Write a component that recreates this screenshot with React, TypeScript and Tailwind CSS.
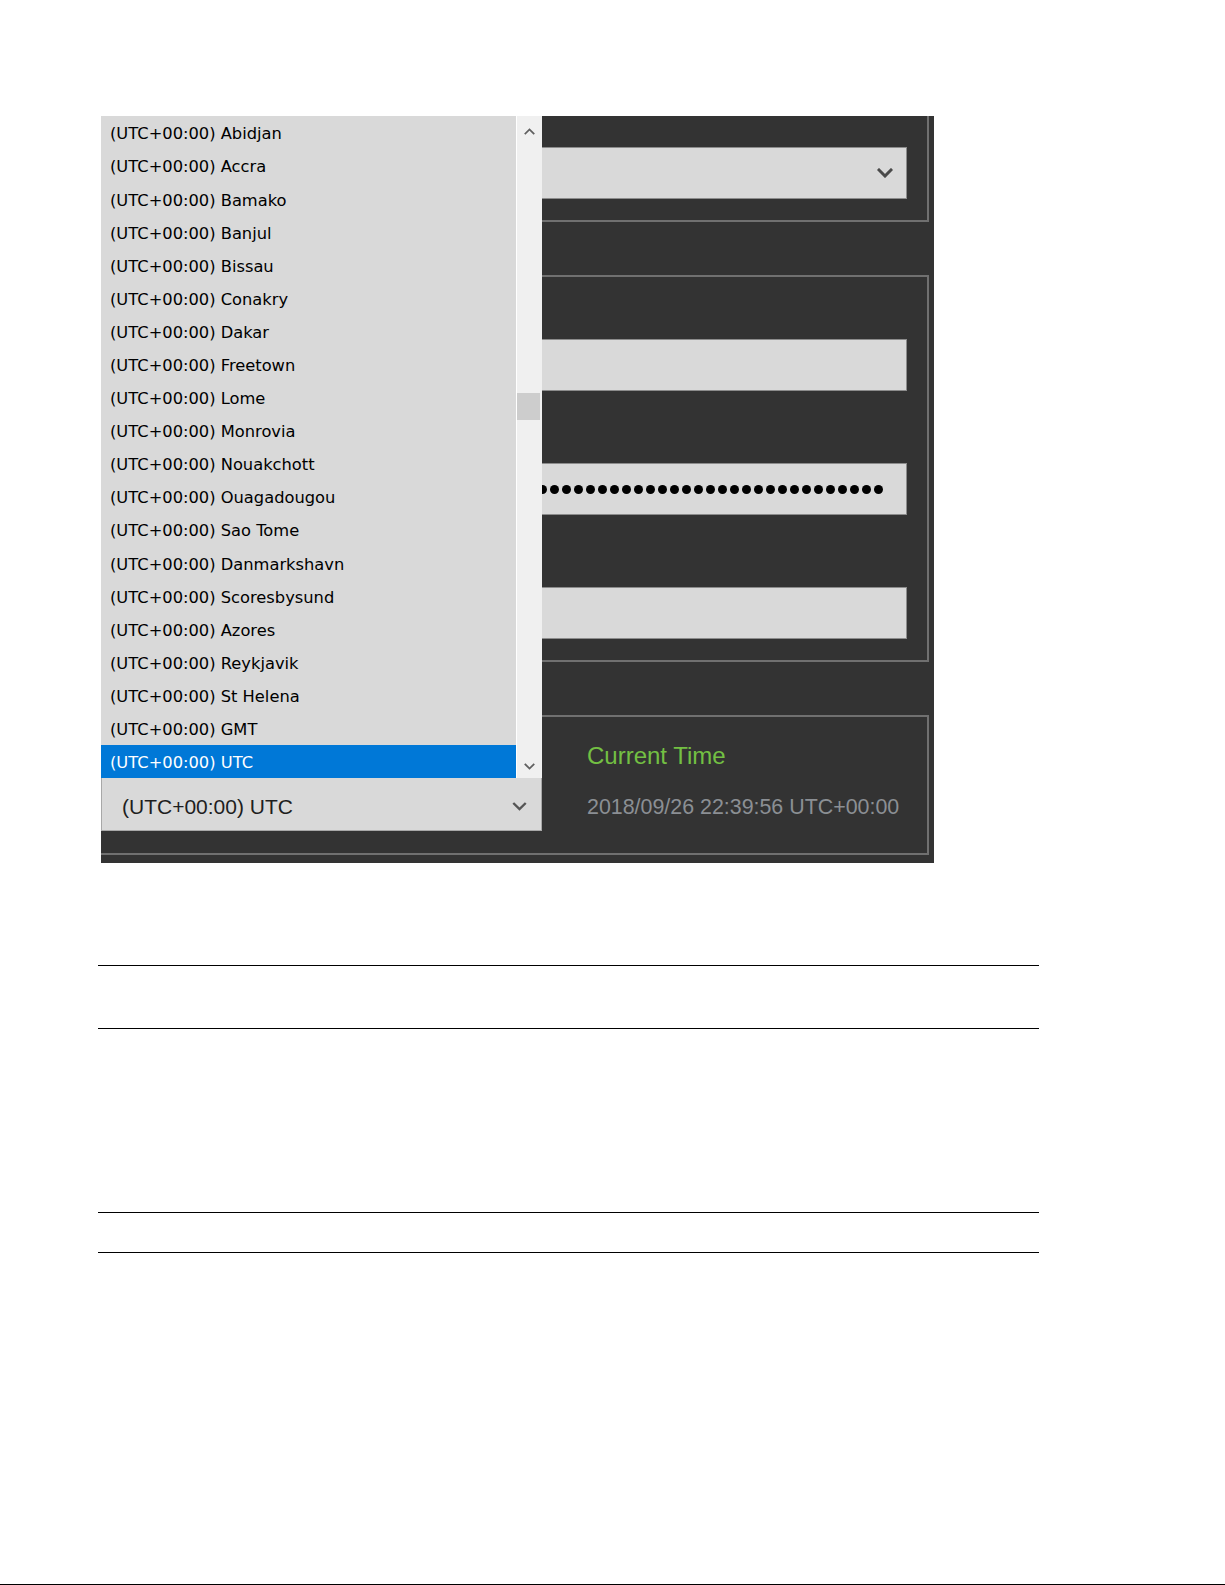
import React from 'react';

const zones = [
  'Abidjan', 'Accra', 'Bamako', 'Banjul', 'Bissau', 'Conakry', 'Dakar', 'Freetown', 'Lome', 'Monrovia',
  'Nouakchott', 'Ouagadougou', 'Sao Tome', 'Danmarkshavn', 'Scoresbysund', 'Azores', 'Reykjavik', 'St Helena', 'GMT', 'UTC',
];

function Chevron({ up = false, className = '', strokeWidth = 3 }: { up?: boolean; className?: string; strokeWidth?: number }) {
  return (
    <svg viewBox="0 0 16 10" className={className} fill="none" stroke="currentColor" strokeWidth={strokeWidth} strokeLinecap="square">
      <polyline points={up ? '2,8 8,2 14,8' : '2,2 8,8 14,2'} />
    </svg>
  );
}

function DropList() {
  return (
    <div className="absolute top-0 left-0 w-[441px] h-[662px] bg-[#d9d9d9] flex z-10">
      <div className="flex-1 flex flex-col">
        {zones.map((z, i) => {
          const active = i === zones.length - 1;
          return (
            <div
              key={z}
              className={`h-[33.1px] flex items-center pl-[9px] pt-[4px] text-[16.3px] font-['DejaVu_Sans',sans-serif] whitespace-nowrap ${
                active ? 'bg-[#0078d7] text-white' : 'text-black'
              }`}
            >
              (UTC+00:00) {z}
            </div>
          );
        })}
      </div>
      <div className="w-[26px] bg-[#f0f0f0] border-l border-white flex flex-col">
        <div className="h-[30px] flex items-center justify-center text-[#606060]">
          <Chevron up className="w-[11px] h-[7px]" strokeWidth={2.6} />
        </div>
        <div className="mt-[247px] h-[27px] w-[23px] bg-[#cdcdcd]" />
        <div className="flex-1" />
        <div className="h-[24px] flex items-center justify-center text-[#606060]">
          <Chevron className="w-[11px] h-[7px]" strokeWidth={2.6} />
        </div>
      </div>
    </div>
  );
}

export default function App() {
  return (
    <div className="h-[1585px] bg-white flex flex-col font-['Liberation_Sans',Arial,sans-serif]">
      <div className="ml-[101px] mt-[116px] w-[833px] h-[747px] shrink-0 bg-[#333333] relative overflow-hidden flex flex-col pr-[5px]">
        <DropList />

        {/* first group */}
        <div className="h-[106px] border-r-2 border-b-2 border-[#707070] pt-[31px] pr-[20px] pl-[120px]">
          <div className="h-[52px] bg-[#d9d9d9] border border-[#8c8c8c] flex items-center justify-end pr-[13px] text-[#4a4a4a]">
            <Chevron className="w-[16px] h-[10px]" />
          </div>
        </div>

        {/* second group */}
        <div className="mt-[53px] h-[387px] border-t-2 border-r-2 border-b-2 border-[#707070] pt-[62px] pr-[20px] pl-[120px] flex flex-col gap-[72px]">
          <div className="h-[52px] bg-[#d9d9d9] border border-[#8c8c8c]" />
          <div className="h-[52px] bg-[#d9d9d9] border border-[#8c8c8c] flex items-center justify-end gap-[3px] pr-[23px] overflow-hidden">
            {Array.from({ length: 60 }).map((_, i) => (
              <span key={i} className="w-[9px] h-[9px] rounded-full bg-black shrink-0" />
            ))}
          </div>
          <div className="h-[52px] bg-[#d9d9d9] border border-[#8c8c8c]" />
        </div>

        {/* current time group */}
        <div className="mt-[53px] h-[140px] border-t-2 border-r-2 border-b-2 border-[#707070] flex items-start">
          <div className="mt-[60px] w-[441px] h-[54px] bg-[#d9d9d9] border border-[#a8a8a8] flex items-center justify-between pl-[20px] pr-[14px] pt-[5px]">
            <span className="text-[21px] text-[#1e1e1e] whitespace-nowrap">(UTC+00:00) UTC</span>
            <Chevron className="w-[15px] h-[9px] text-[#555555]" strokeWidth={2.6} />
          </div>
          <div className="ml-[45px] mt-[25px] flex flex-col gap-[25px]">
            <div className="text-[24px] leading-[28px] text-[#73c043] whitespace-nowrap">Current Time</div>
            <div className="text-[21.4px] leading-[24px] text-[#8b8f94] whitespace-nowrap">2018/09/26 22:39:56 UTC+00:00</div>
          </div>
        </div>
      </div>

      <div className="ml-[98px] mt-[102px] w-[941px] flex flex-col">
        <div className="h-px bg-black" />
        <div className="h-[62px]" />
        <div className="h-px bg-black" />
        <div className="h-[183px]" />
        <div className="h-px bg-black" />
        <div className="h-[39px]" />
        <div className="h-px bg-black" />
      </div>

      <div className="flex-1" />
      <div className="h-px bg-black" />
    </div>
  );
}
